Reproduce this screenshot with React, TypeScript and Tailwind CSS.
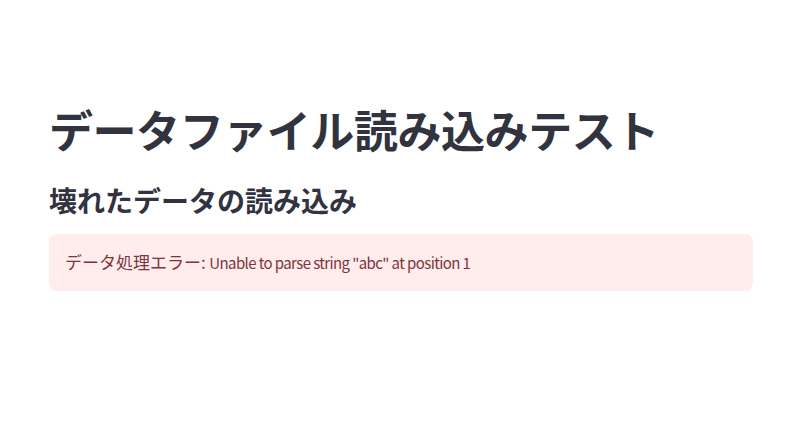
export default function App() {
  return (
    <div
      className="min-h-screen bg-white text-[#31333f]"
      style={{ fontFamily: '"Noto Sans CJK JP", "Noto Sans", sans-serif' }}
    >
      <main className="ml-[49px] w-[704px] pt-[103px]">
        <h1 className="text-[44px] font-bold leading-[52px] tracking-[-0.01em]">
          データファイル読み込みテスト
        </h1>
        <h2 className="mt-[28px] text-[28px] font-semibold leading-[34px]">
          壊れたデータの読み込み
        </h2>
        <div className="mt-[17px] rounded-lg bg-[#ffecec] px-4 py-4 leading-6 text-[#7d353b]">
          <span className="text-[17px]">データ処理エラー:</span>{' '}
          <span className="text-[15px] tracking-[-0.6px]">
            Unable to parse string "abc" at position 1
          </span>
        </div>
      </main>
    </div>
  );
}
